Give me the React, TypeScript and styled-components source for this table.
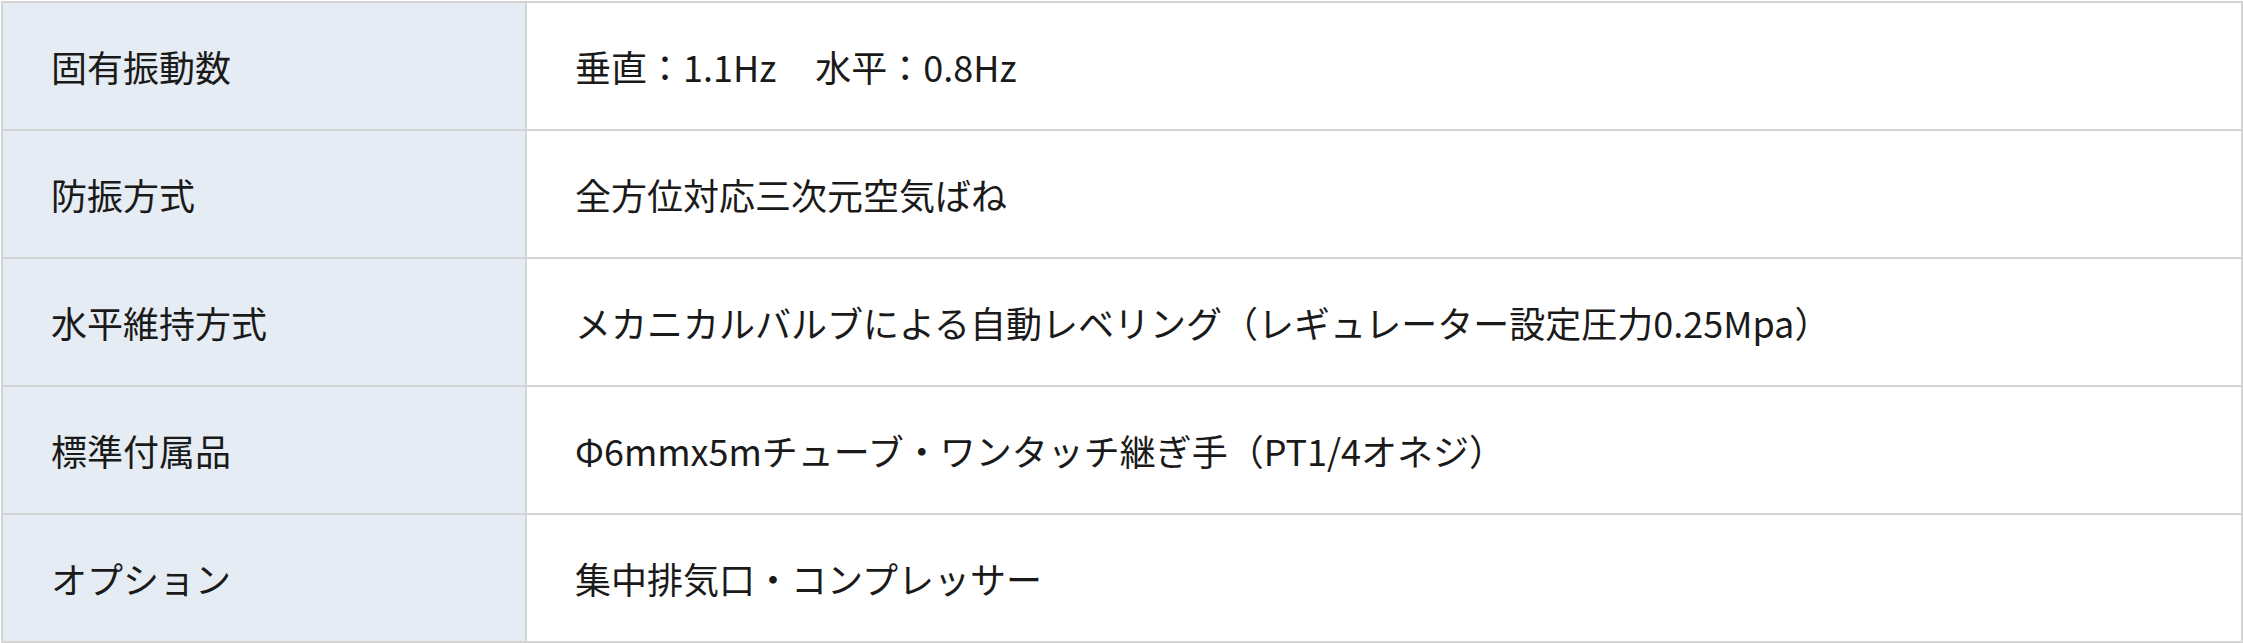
import {ReactNode} from 'react';
import styled, {createGlobalStyle} from 'styled-components';

const COLORS = {
  border: '#d4d4d4',
  labelBg: '#e5ecf3',
  text: '#1a1a1a',
  white: '#ffffff',
};

const GlobalStyle = createGlobalStyle`
  html, body {
    margin: 0;
    padding: 0;
    background: ${COLORS.white};
  }
  body {
    font-family: "Noto Sans CJK JP", "Noto Sans", sans-serif;
    color: ${COLORS.text};
  }
`;

// gap between the two frequency values
const Spacer = styled.span`
  display: inline-block;
  width: 39px;
`;

const SPECS: {label: string; value: ReactNode}[] = [
  {
    label: '固有振動数',
    value: (
      <>
        垂直：1.1Hz<Spacer />水平：0.8Hz
      </>
    ),
  },
  {label: '防振方式', value: '全方位対応三次元空気ばね'},
  {label: '水平維持方式', value: 'メカニカルバルブによる自動レベリング（レギュレーター設定圧力0.25Mpa）'},
  {label: '標準付属品', value: 'Φ6mmx5mチューブ・ワンタッチ継ぎ手（PT1/4オネジ）'},
  {label: 'オプション', value: '集中排気口・コンプレッサー'},
];

const Page = styled.div`
  padding: 1px 0 0 1px;
`;

const SpecTable = styled.div`
  box-sizing: border-box;
  width: 2242px;
  border-top: 2px solid ${COLORS.border};
  border-left: 2px solid ${COLORS.border};
`;

const Row = styled.div`
  display: grid;
  grid-template-columns: 524px 1fr;
`;

const Cell = styled.div<{$head?: boolean}>`
  box-sizing: border-box;
  height: 128px;
  display: flex;
  align-items: center;
  padding: 0 46px 0 48px;
  border-right: 2px solid ${COLORS.border};
  border-bottom: 2px solid ${COLORS.border};
  background: ${(p) => (p.$head ? COLORS.labelBg : COLORS.white)};
  font-size: 36px;
  white-space: nowrap;
`;

export default function App() {
  return (
    <Page>
      <GlobalStyle />
      <SpecTable>
        {SPECS.map((s) => (
          <Row key={s.label}>
            <Cell $head>{s.label}</Cell>
            <Cell>{s.value}</Cell>
          </Row>
        ))}
      </SpecTable>
    </Page>
  );
}
